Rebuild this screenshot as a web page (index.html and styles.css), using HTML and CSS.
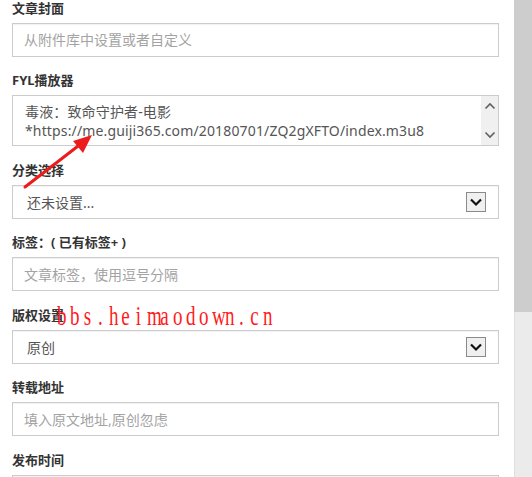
FILE: index.html
```html
<!DOCTYPE html>
<html lang="zh-CN">
<head>
<meta charset="utf-8">
<title>文章设置</title>
<link rel="stylesheet" href="styles.css">
</head>
<body>
<div class="page">
  <main class="form">
    <div class="field">
      <label class="label">文章封面</label>
      <input class="input" type="text" placeholder="从附件库中设置或者自定义">
    </div>
    <div class="field">
      <label class="label">FYL播放器</label>
      <div class="textarea-box">
        <textarea class="textarea">毒液：致命守护者-电影
*https://me.guiji365.com/20180701/ZQ2gXFTO/index.m3u8</textarea>
        <div class="ta-scroll">
          <svg width="12" height="8" viewBox="0 0 12 8"><path d="M1.5 6.5 L6 2 L10.5 6.5" fill="none" stroke="#606060" stroke-width="1.6"/></svg>
          <svg width="12" height="8" viewBox="0 0 12 8"><path d="M1.5 1.5 L6 6 L10.5 1.5" fill="none" stroke="#606060" stroke-width="1.6"/></svg>
        </div>
      </div>
    </div>
    <div class="field">
      <label class="label">分类选择</label>
      <div class="select">
        <span class="select-text">还未设置...</span>
        <span class="select-btn"><svg width="14" height="10" viewBox="0 0 14 10"><path d="M2 2.5 L7 7.5 L12 2.5" fill="none" stroke="#111" stroke-width="2.2"/></svg></span>
      </div>
    </div>
    <div class="field">
      <label class="label">标签：( 已有标签+ )</label>
      <input class="input" type="text" placeholder="文章标签，使用逗号分隔">
    </div>
    <div class="field">
      <label class="label">版权设置</label>
      <div class="select">
        <span class="select-text">原创</span>
        <span class="select-btn"><svg width="14" height="10" viewBox="0 0 14 10"><path d="M2 2.5 L7 7.5 L12 2.5" fill="none" stroke="#111" stroke-width="2.2"/></svg></span>
      </div>
    </div>
    <div class="field">
      <label class="label">转载地址</label>
      <input class="input" type="text" placeholder="填入原文地址,原创忽虑">
    </div>
    <div class="field">
      <label class="label">发布时间</label>
      <input class="input" type="text">
    </div>
  </main>
  <div class="scrollbar"><div class="thumb"></div></div>
  <div class="watermark"><span class="ch">b</span><span class="ch">b</span><span class="ch">s</span><span class="ch">.</span><span class="ch">h</span><span class="ch">e</span><span class="ch">i</span><span class="ch">m</span><span class="ch">a</span><span class="ch">o</span><span class="ch">d</span><span class="ch">o</span><span class="ch">w</span><span class="ch">n</span><span class="ch">.</span><span class="ch">c</span><span class="ch">n</span></div>
  <svg class="arrow" width="110" height="200" viewBox="0 0 110 200">
    <line x1="25" y1="187" x2="82" y2="143" stroke="#ec1c1c" stroke-width="3" stroke-linecap="round"/>
    <polygon points="92,135 73,141 83,153" fill="#ec1c1c"/>
  </svg>
</div>
</body>
</html>
```
FILE: styles.css
```css
html, body {
  margin: 0;
  padding: 0;
  background: #fff;
}
body {
  font-family: "Noto Sans", "Noto Sans CJK SC", sans-serif;
  color: #333;
}
.page {
  position: relative;
  display: flex;
  width: 532px;
  height: 477px;
  overflow: hidden;
}
.form {
  flex: 1;
  padding: 0 15px 0 12px;
  margin-top: -2.5px;
}
.field {
  margin-bottom: 13.5px;
}
.label {
  display: block;
  height: 20px;
  line-height: 20px;
  font-size: 13px;
  font-weight: bold;
  color: #333;
  margin-bottom: 5px;
  font-family: "Noto Sans", "Noto Sans CJK SC", sans-serif;
}
.input {
  display: block;
  box-sizing: border-box;
  width: 100%;
  height: 34px;
  border: 1px solid #ccc;
  box-shadow: inset 0 1px 1px rgba(0,0,0,0.06);
  padding: 0 11px;
  font-size: 14px;
  font-family: "Noto Sans", "Noto Sans CJK SC", sans-serif;
  color: #555;
  outline: none;
  background: #fff;
}
.input::placeholder {
  color: #a3a3a3;
}
.textarea-box {
  display: flex;
  box-sizing: border-box;
  height: 51px;
  border: 1px solid #ccc;
  background: #fff;
}
.textarea {
  flex: 1;
  border: 0;
  resize: none;
  overflow: hidden;
  padding: 6px 12px;
  font-size: 14px;
  line-height: 19px;
  letter-spacing: 0.15px;
  font-family: "Noto Sans", "Noto Sans CJK SC", sans-serif;
  color: #555;
  outline: none;
  white-space: pre;
}
.ta-scroll {
  width: 17px;
  background: #f0f0f0;
  display: flex;
  flex-direction: column;
  align-items: center;
  justify-content: space-between;
  padding: 6px 0 6px;
}
.select {
  display: flex;
  align-items: center;
  justify-content: space-between;
  box-sizing: border-box;
  height: 34px;
  border: 1px solid #ccc;
  box-shadow: inset 0 1px 1px rgba(0,0,0,0.05);
  padding: 0 12px 0 14px;
  font-size: 14px;
  color: #555;
  background: #fff;
}
.select-btn {
  box-sizing: border-box;
  width: 20px;
  height: 20px;
  border: 1px solid #8a8a8a;
  background: #f0f0f0;
  display: flex;
  align-items: center;
  justify-content: center;
}
.scrollbar {
  width: 18px;
  background: #ebebeb;
  border-left: 1px solid #dedede;
  box-sizing: border-box;
}
.thumb {
  height: 312px;
  background: #cdcdcd;
  margin-left: -1px;
}
.watermark {
  position: absolute;
  left: 55px;
  top: 301px;
  display: flex;
  font-family: "Liberation Serif", serif;
  font-size: 28px;
  color: #ff1a1a;
  line-height: 30px;
}
.ch {
  display: inline-block;
  width: 12.9px;
  text-align: center;
  transform: scaleX(0.68);
}
.arrow {
  position: absolute;
  left: 0;
  top: 0;
}
```
